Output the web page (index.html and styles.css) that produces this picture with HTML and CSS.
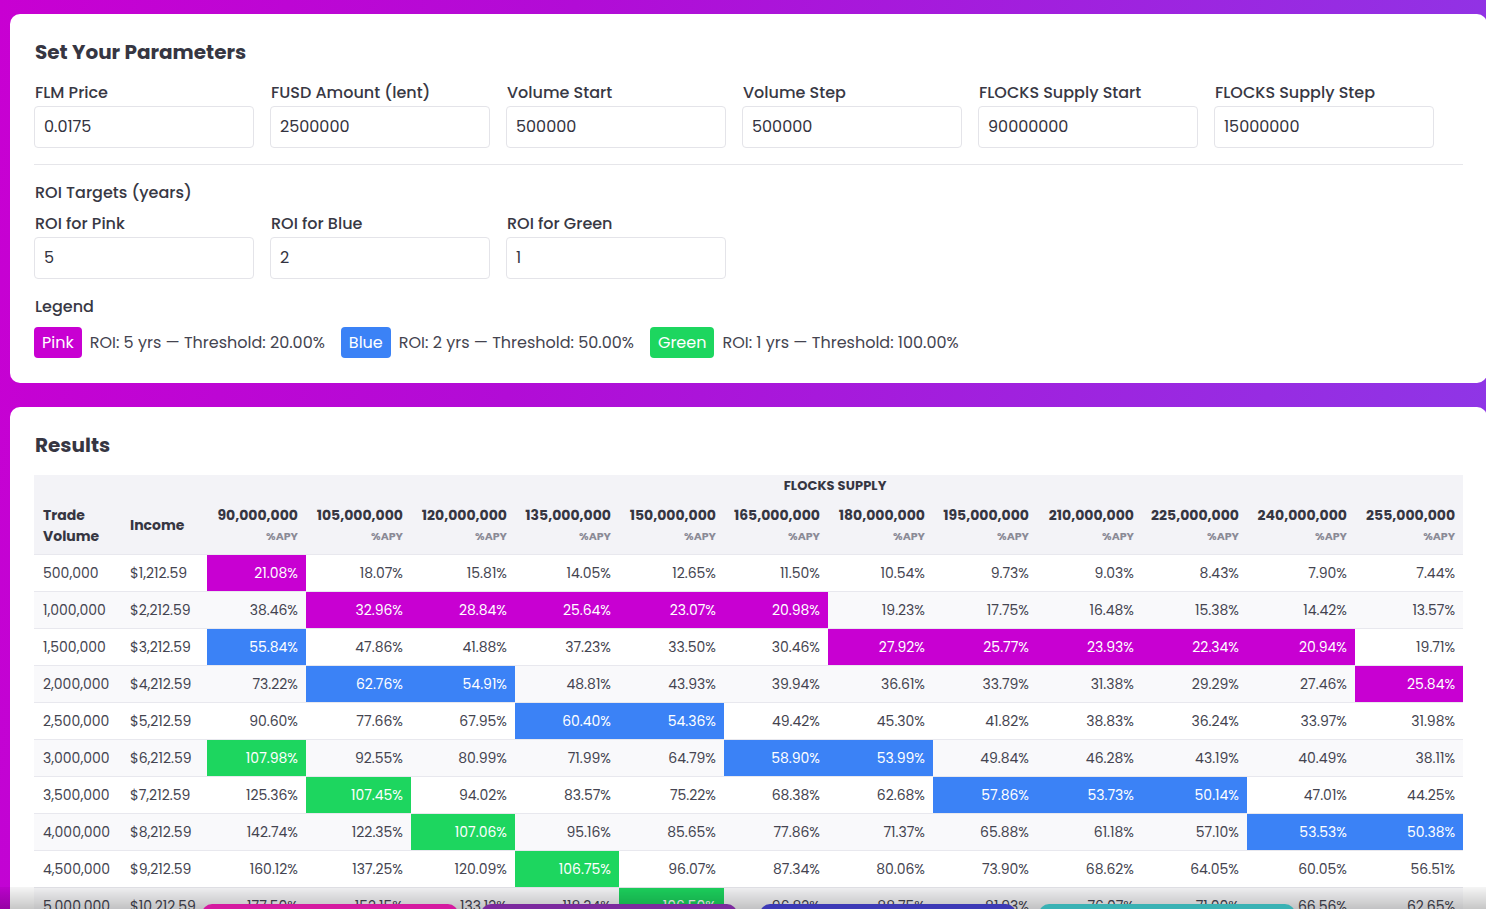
FILE: index.html
```html
<!DOCTYPE html>
<html>
<head>
<meta charset="utf-8">
<title>FLOCKS ROI</title>
<link rel="stylesheet" href="styles.css">
</head>
<body>
<div class="page">
  <section class="card">
    <h2 class="title">Set Your Parameters</h2>
    <div class="fields">
      <div class="field"><label class="lbl">FLM Price</label><div class="input">0.0175</div></div>
      <div class="field"><label class="lbl">FUSD Amount (lent)</label><div class="input">2500000</div></div>
      <div class="field"><label class="lbl">Volume Start</label><div class="input">500000</div></div>
      <div class="field"><label class="lbl">Volume Step</label><div class="input">500000</div></div>
      <div class="field"><label class="lbl">FLOCKS Supply Start</label><div class="input">90000000</div></div>
      <div class="field"><label class="lbl">FLOCKS Supply Step</label><div class="input">15000000</div></div>
    </div>
    <hr class="sep">
    <h3 class="sub">ROI Targets (years)</h3>
    <div class="fields fields-roi">
      <div class="field"><label class="lbl">ROI for Pink</label><div class="input">5</div></div>
      <div class="field"><label class="lbl">ROI for Blue</label><div class="input">2</div></div>
      <div class="field"><label class="lbl">ROI for Green</label><div class="input">1</div></div>
    </div>
    <h3 class="sub sub-legend">Legend</h3>
    <div class="legend">
      <span class="badge bp">Pink</span><span class="ltxt">ROI: 5 yrs — Threshold: 20.00%</span>
      <span class="badge bb">Blue</span><span class="ltxt">ROI: 2 yrs — Threshold: 50.00%</span>
      <span class="badge bg">Green</span><span class="ltxt">ROI: 1 yrs — Threshold: 100.00%</span>
    </div>
  </section>

  <section class="card card-results">
    <h2 class="title title-results">Results</h2>
    <table class="tbl">
      <colgroup>
        <col class="w87"><col class="w86">
        <col class="w99"><col class="w105"><col class="w104"><col class="w104"><col class="w105"><col class="w104">
        <col class="w105"><col class="w104"><col class="w105"><col class="w105"><col class="w108"><col class="w108">
      </colgroup>
      <thead>
        <tr class="hr1"><th></th><th></th><th colspan="12" class="supply">FLOCKS SUPPLY</th></tr>
        <tr class="hr2">
          <th class="hl">Trade Volume</th><th class="hl">Income</th>
          <th class="hs"><div class="sv">90,000,000</div><div class="apy">%APY</div></th>
          <th class="hs"><div class="sv">105,000,000</div><div class="apy">%APY</div></th>
          <th class="hs"><div class="sv">120,000,000</div><div class="apy">%APY</div></th>
          <th class="hs"><div class="sv">135,000,000</div><div class="apy">%APY</div></th>
          <th class="hs"><div class="sv">150,000,000</div><div class="apy">%APY</div></th>
          <th class="hs"><div class="sv">165,000,000</div><div class="apy">%APY</div></th>
          <th class="hs"><div class="sv">180,000,000</div><div class="apy">%APY</div></th>
          <th class="hs"><div class="sv">195,000,000</div><div class="apy">%APY</div></th>
          <th class="hs"><div class="sv">210,000,000</div><div class="apy">%APY</div></th>
          <th class="hs"><div class="sv">225,000,000</div><div class="apy">%APY</div></th>
          <th class="hs"><div class="sv">240,000,000</div><div class="apy">%APY</div></th>
          <th class="hs"><div class="sv">255,000,000</div><div class="apy">%APY</div></th>
        </tr>
      </thead>
      <tbody>
        <tr><td class="l">500,000</td><td class="l">$1,212.59</td><td class="p">21.08%</td><td>18.07%</td><td>15.81%</td><td>14.05%</td><td>12.65%</td><td>11.50%</td><td>10.54%</td><td>9.73%</td><td>9.03%</td><td>8.43%</td><td>7.90%</td><td>7.44%</td></tr>
        <tr><td class="l">1,000,000</td><td class="l">$2,212.59</td><td>38.46%</td><td class="p">32.96%</td><td class="p">28.84%</td><td class="p">25.64%</td><td class="p">23.07%</td><td class="p">20.98%</td><td>19.23%</td><td>17.75%</td><td>16.48%</td><td>15.38%</td><td>14.42%</td><td>13.57%</td></tr>
        <tr><td class="l">1,500,000</td><td class="l">$3,212.59</td><td class="b">55.84%</td><td>47.86%</td><td>41.88%</td><td>37.23%</td><td>33.50%</td><td>30.46%</td><td class="p">27.92%</td><td class="p">25.77%</td><td class="p">23.93%</td><td class="p">22.34%</td><td class="p">20.94%</td><td>19.71%</td></tr>
        <tr><td class="l">2,000,000</td><td class="l">$4,212.59</td><td>73.22%</td><td class="b">62.76%</td><td class="b">54.91%</td><td>48.81%</td><td>43.93%</td><td>39.94%</td><td>36.61%</td><td>33.79%</td><td>31.38%</td><td>29.29%</td><td>27.46%</td><td class="p">25.84%</td></tr>
        <tr><td class="l">2,500,000</td><td class="l">$5,212.59</td><td>90.60%</td><td>77.66%</td><td>67.95%</td><td class="b">60.40%</td><td class="b">54.36%</td><td>49.42%</td><td>45.30%</td><td>41.82%</td><td>38.83%</td><td>36.24%</td><td>33.97%</td><td>31.98%</td></tr>
        <tr><td class="l">3,000,000</td><td class="l">$6,212.59</td><td class="g">107.98%</td><td>92.55%</td><td>80.99%</td><td>71.99%</td><td>64.79%</td><td class="b">58.90%</td><td class="b">53.99%</td><td>49.84%</td><td>46.28%</td><td>43.19%</td><td>40.49%</td><td>38.11%</td></tr>
        <tr><td class="l">3,500,000</td><td class="l">$7,212.59</td><td>125.36%</td><td class="g">107.45%</td><td>94.02%</td><td>83.57%</td><td>75.22%</td><td>68.38%</td><td>62.68%</td><td class="b">57.86%</td><td class="b">53.73%</td><td class="b">50.14%</td><td>47.01%</td><td>44.25%</td></tr>
        <tr><td class="l">4,000,000</td><td class="l">$8,212.59</td><td>142.74%</td><td>122.35%</td><td class="g">107.06%</td><td>95.16%</td><td>85.65%</td><td>77.86%</td><td>71.37%</td><td>65.88%</td><td>61.18%</td><td>57.10%</td><td class="b">53.53%</td><td class="b">50.38%</td></tr>
        <tr><td class="l">4,500,000</td><td class="l">$9,212.59</td><td>160.12%</td><td>137.25%</td><td>120.09%</td><td class="g">106.75%</td><td>96.07%</td><td>87.34%</td><td>80.06%</td><td>73.90%</td><td>68.62%</td><td>64.05%</td><td>60.05%</td><td>56.51%</td></tr>
        <tr><td class="l">5,000,000</td><td class="l">$10,212.59</td><td>177.50%</td><td>152.15%</td><td>133.12%</td><td>118.34%</td><td class="g">106.50%</td><td>96.82%</td><td>88.75%</td><td>81.93%</td><td>76.07%</td><td>71.00%</td><td>66.56%</td><td>62.65%</td></tr>
        <tr><td class="l">5,500,000</td><td class="l">$11,212.59</td><td>194.88%</td><td>167.04%</td><td>146.16%</td><td>129.92%</td><td>116.93%</td><td class="g">106.30%</td><td>97.44%</td><td>89.95%</td><td>83.52%</td><td>77.95%</td><td>73.08%</td><td>68.78%</td></tr>
      </tbody>
    </table>
  </section>
</div>
<div class="dock">
  <span class="pill pill-pink"></span>
  <span class="pill pill-purple"></span>
  <span class="pill pill-indigo"></span>
  <span class="pill pill-teal"></span>
</div>
</body>
</html>
```

FILE: styles.css
```css
html, body {
  margin: 0;
  padding: 0;
  overflow: hidden;
  height: 100%;
}
body {
  background: linear-gradient(100deg, #c800d2 0%, #b20cd6 35%, #8c39e7 100%);
  font-family: "Poppins", Inter, "DejaVu Sans", sans-serif;
  color: #3a3a46;
}
.page {
  padding: 14px 0 0 10px;
  display: flex;
  flex-direction: column;
  gap: 24px;
}
.card {
  width: 1477px;
  box-sizing: border-box;
  background: #fff;
  border-radius: 10px;
  padding: 24px 24px 25px 24px;
}
.title {
  margin: 0 0 15px 1px;
  font-size: 20px;
  line-height: 28px;
  font-weight: 700;
  color: #363642;
}
.title-results {
  margin-bottom: 16px;
}
.fields {
  display: flex;
  gap: 16px;
}
.field {
  width: 220px;
  display: flex;
  flex-direction: column;
}
.lbl {
  font-size: 16px;
  font-weight: 500;
  line-height: 22px;
  margin: 1px 0 2px 1px;
  color: #383844;
}
.input {
  height: 42px;
  box-sizing: border-box;
  border: 1px solid #e4e4e9;
  border-radius: 4px;
  padding: 0 9px;
  font-size: 16px;
  line-height: 40px;
  color: #333340;
}
.sep {
  border: 0;
  border-top: 1px solid #e6e6ea;
  margin: 16px 0 16px 0;
}
.sub {
  margin: 0 0 7px 1px;
  font-size: 16px;
  line-height: 24px;
  font-weight: 500;
  color: #383844;
}
.sub-legend {
  margin-top: 16px;
  margin-bottom: 8px;
}
.legend {
  display: flex;
  align-items: center;
  font-size: 16px;
  color: #444450;
}
.badge {
  height: 31px;
  line-height: 31px;
  padding: 0 8px;
  border-radius: 4px;
  color: #fff;
  font-size: 16px;
}
.bp { background: #c800d2; }
.bb { background: #3b82f6; }
.bg { background: #1dd65f; }
.ltxt {
  margin: 0 16px 0 8px;
}
.card-results {
  padding-bottom: 40px;
}
.tbl {
  border-collapse: collapse;
  table-layout: fixed;
  width: 1429px;
  font-size: 14px;
  color: #444450;
}
.w86 { width: 86px; }
.w87 { width: 87px; }
.w99 { width: 99px; }
.w104 { width: 104px; }
.w105 { width: 105px; }
.w108 { width: 108px; }
thead th {
  background: #f3f3f7;
  color: #363642;
  font-weight: 700;
}
.hr1 th {
  height: 22px;
  padding: 0;
  font-size: 13px;
  line-height: 22px;
  vertical-align: bottom;
}
.supply {
  text-align: center;
  letter-spacing: 0.1px;
}
.hr2 th {
  height: 57px;
  padding: 0 8px;
  border-bottom: 1px solid #e8e8ee;
  vertical-align: middle;
}
.hr2 th.hl {
  padding-left: 9px;
  text-align: left;
  font-size: 14px;
  line-height: 21px;
}
.hs {
  text-align: right;
}
.sv {
  font-size: 14px;
  line-height: 21px;
  white-space: nowrap;
}
.apy {
  font-size: 11px;
  line-height: 21px;
  color: #8a8a96;
}
tbody td {
  height: 36px;
  padding: 0 8px;
  text-align: right;
  border-bottom: 1px solid #e8e8ee;
  white-space: nowrap;
}
tbody tr:nth-child(even) td {
  background: #f9f9fb;
}
tbody td.l {
  text-align: left;
  padding-left: 9px;
}
tbody td.p { background: #c800d2 !important; color: #fff; }
tbody td.b { background: #3b82f6 !important; color: #fff; }
tbody td.g { background: #1dd65f !important; color: #fff; }
.dock {
  position: fixed;
  left: 0;
  right: 0;
  bottom: 0;
  height: 22px;
  background: linear-gradient(to bottom, rgba(0,0,0,0.04), rgba(0,0,0,0.22));
  display: flex;
  justify-content: center;
  gap: 23px;
  padding: 17px 0 0 11px;
  box-sizing: border-box;
  overflow: hidden;
}
.pill {
  width: 256px;
  height: 30px;
  border-radius: 10px;
  flex: none;
}
.pill-pink { background: #d51ba0; }
.pill-purple { background: #7c2a9e; }
.pill-indigo { background: #3d3ab6; }
.pill-teal { background: #3ab2b4; }
```
